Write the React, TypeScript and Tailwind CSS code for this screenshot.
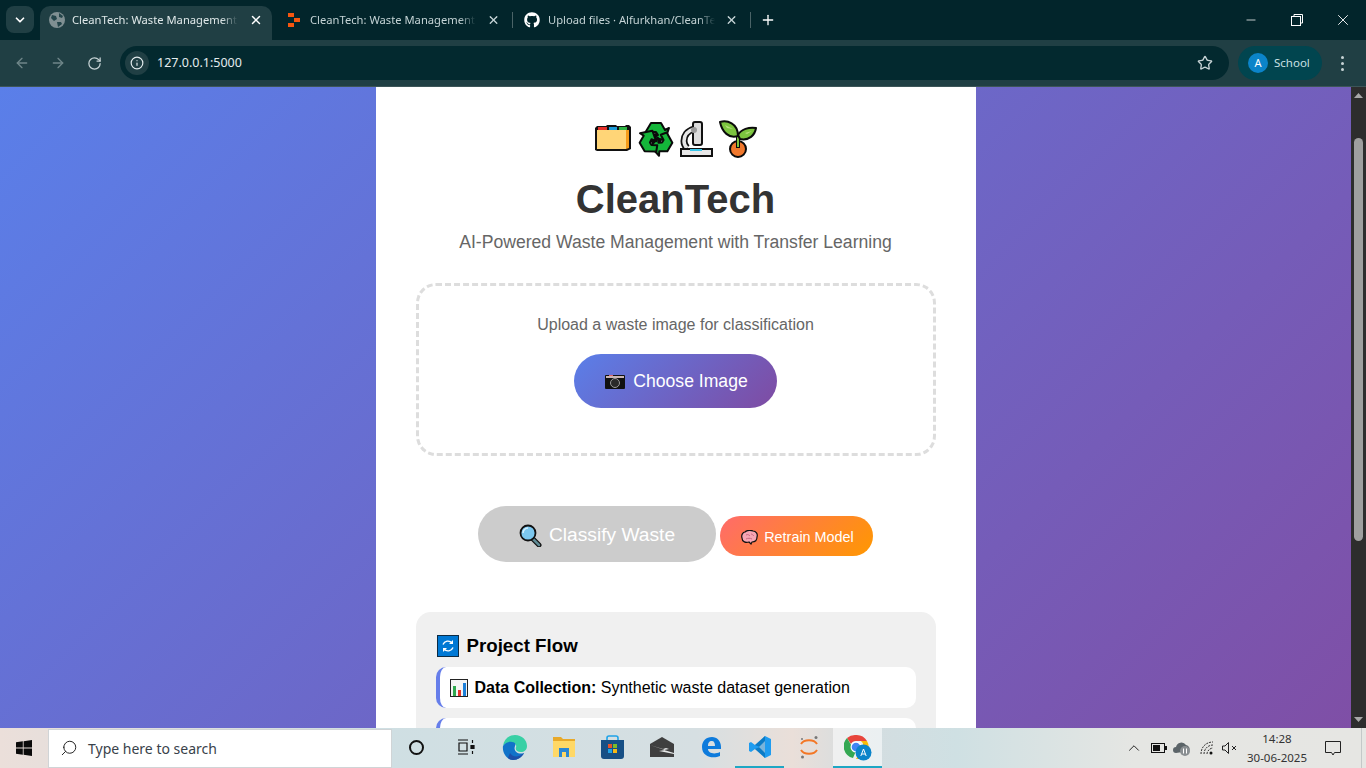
import React from 'react';
import { ArrowLeft, ArrowRight, RotateCw, X, Plus, Star, Info, ChevronDown, ChevronUp, Search, Minus } from 'lucide-react';
import { FaGithub } from 'react-icons/fa';

const FolderEmoji = () => (
  <svg width="38" height="30" viewBox="0 0 38 30" className="block">
    <path d="M3 2h9l1-1h9l1 1h8l1-1h3l2 2v22l-4 2H3l-2-1V4z" fill="#111" />
    <path d="M4 3h9v3H4z" fill="#e5312a" />
    <path d="M15 3h8v3h-8z" fill="#1d9bd8" />
    <path d="M25 3h8v3h-8z" fill="#2fb344" />
    <path d="M32 6h3v18l-3 1z" fill="#f59c1a" />
    <path d="M3 6h29v19H3z" fill="#ffd577" />
  </svg>
);

const RECYCLE_ARROW = 'M7 13 13 3H23L27 10 31 8 27 20 16 18 20 15 18 12H15L12 17Z';

const RecycleEmoji = () => (
  <svg width="36" height="37" viewBox="0 0 36 37" className="block">
    <circle cx="18" cy="19" r="6" fill="#0a0a0a" />
    <g fill="#14b63a" stroke="#0a0a0a" strokeWidth="2" strokeLinejoin="round">
      <path d={RECYCLE_ARROW} />
      <path d={RECYCLE_ARROW} transform="rotate(120 18 19)" />
      <path d={RECYCLE_ARROW} transform="rotate(240 18 19)" />
    </g>
  </svg>
);

const MicroscopeEmoji = () => (
  <svg width="33" height="37" viewBox="0 0 33 37" className="block">
    <path d="M14 9C7 11 4 16 4 21c0 3 1 5 3 7" fill="none" stroke="#111" strokeWidth="7" />
    <path d="M14 9C7 11 4 16 4 21c0 3 1 5 3 7" fill="none" stroke="#e6e6e6" strokeWidth="3.500" />
    <rect x="13" y="2" width="9" height="23" rx="2" fill="#dcdcdc" stroke="#111" strokeWidth="2" />
    <circle cx="14" cy="10" r="3" fill="#9a9a9a" />
    <rect x="1" y="29" width="31" height="7" fill="#e8e8e8" stroke="#111" strokeWidth="2" />
    <path d="M10 29h12v2H10z" fill="#39c6ea" />
  </svg>
);

const SeedlingEmoji = () => (
  <svg width="38" height="38" viewBox="0 0 38 38" className="block">
    <circle cx="19" cy="29" r="8" fill="#f0782d" stroke="#0a0a0a" strokeWidth="2" />
    <path d="M19 16v12" stroke="#0a0a0a" strokeWidth="4" />
    <path d="M19 16v11" stroke="#7cc43f" strokeWidth="2" />
    <path d="M1 2C8 0 19 3 19 16 10 19 3 12 1 2Z" fill="#7cc43f" stroke="#0a0a0a" strokeWidth="2" strokeLinejoin="round" />
    <path d="M19 15c3-6 11-8 18-7-1 7-7 13-16 11z" fill="#7cc43f" stroke="#0a0a0a" strokeWidth="2" strokeLinejoin="round" />
    <path d="M6 5l8 4-6-1zM26 13l7-2-5 3z" fill="#b6e07c" />
  </svg>
);

const CameraEmoji = () => (
  <svg width="20" height="15" viewBox="0 0 20 15" className="inline-block align-[-1px]">
    <rect x="0" y="1" width="20" height="14" rx="1" fill="#111" />
    <path d="M1 2h18v2H1z" fill="#c9b5b5" />
    <path d="M4 1h4v1H4z" fill="#e06666" />
    <circle cx="10" cy="9" r="4.500" fill="#2a2a2a" stroke="#9a9a9a" />
  </svg>
);

const MagnifierEmoji = () => (
  <svg width="23" height="23" viewBox="0 0 23 23" className="inline-block align-[-4px]">
    <path d="M13 14l7 7" stroke="#111" strokeWidth="5" strokeLinecap="round" />
    <path d="M14 15l6 6" stroke="#5f8a94" strokeWidth="2.500" strokeLinecap="round" />
    <circle cx="9" cy="9" r="7.500" fill="#7cc7ee" stroke="#111" strokeWidth="1.800" />
    <path d="M4 9a5 5 0 0 1 5-5" stroke="#d6f1ff" strokeWidth="1.500" fill="none" />
  </svg>
);

const BrainEmoji = () => (
  <svg width="17" height="15" viewBox="0 0 17 15" className="inline-block align-[-2px]">
    <path d="M4 2c2-2 6-2 8-1 3 0 5 3 4 6 0 3-2 5-5 5l-1 2-2-2c-3 1-7 0-7-4-1-3 1-6 3-6z" fill="#f7a6b4" stroke="#111" strokeWidth="1.200" />
    <path d="M5 5c2-1 3 0 4 1M10 4c1 0 2 1 3 2M5 9c2-1 4-1 6 0" stroke="#c96a80" fill="none" />
  </svg>
);

const RefreshEmoji = () => (
  <svg width="22" height="22" viewBox="0 0 22 22" className="inline-block align-[-4px]">
    <rect x="0.500" y="0.500" width="21" height="21" fill="#0078d4" stroke="#0c2b44" />
    <path d="M6 9.500a5.300 5.300 0 0 1 9-1.500M16 12.500a5.300 5.300 0 0 1-9 1.500" stroke="#fff" strokeWidth="1.400" fill="none" />
    <path d="M16 5v4h-4zM6 17v-4h4z" fill="#fff" />
  </svg>
);

const ChartEmoji = () => (
  <svg width="18" height="18" viewBox="0 0 18 18" className="inline-block align-[-3px]">
    <rect x="0.500" y="0.500" width="17" height="17" fill="#f4f4f4" stroke="#222" />
    <path d="M3 7h3v10H3z" fill="#2fa84f" />
    <path d="M8 11h3v6H8z" fill="#e5312a" />
    <path d="M13 4h3v13h-3z" fill="#1d7fd8" />
  </svg>
);

const OrangeFavicon = () => (
  <svg width="12" height="14" viewBox="0 0 12 14" className="shrink-0">
    <path d="M0 0h6v4H0zM6 5h6v4H6zM0 10h6v4H0z" fill="#f4560f" />
  </svg>
);

const GlobeFavicon = () => (
  <svg width="16" height="16" viewBox="0 0 16 16" className="shrink-0">
    <circle cx="8" cy="8" r="8" fill="#7f8f92" />
    <path d="M3 3l4 1 1 3-3 2-3-3zM10 1l4 3-1 2-3-1zM8 10l4 0 1 2-4 3z" fill="#23444a" />
  </svg>
);

const TabTitle = ({ text, w }: { text: string; w: string }) => (
  <span
    className={`${w} overflow-hidden whitespace-nowrap text-[11.2px] [mask-image:linear-gradient(90deg,#000_90%,transparent)]`}
  >
    {text}
  </span>
);

const TabStrip = () => (
  <div className="flex h-10 shrink-0 items-end bg-[#02252b] font-['Noto_Sans',sans-serif] text-[#c4d3d5]">
    <div className="mb-[7px] ml-[6px] flex h-[27px] w-[28px] items-center justify-center rounded-lg bg-[#203f44] text-white">
      <ChevronDown size={14} strokeWidth={3} />
    </div>
    <div className="ml-[6px] flex h-[34px] w-[232px] items-center rounded-t-[10px] bg-[#203f44] pb-[6px] pl-[9px] text-[#dfe8e9]">
      <GlobeFavicon />
      <span className="ml-[7px] flex">
        <TabTitle text="CleanTech: Waste Management" w="w-[166px]" />
      </span>
      <X size={14} strokeWidth={2.5} className="ml-[11px] text-white" />
    </div>
    <div className="flex h-[34px] w-[241px] items-center pb-[6px] pl-[16px]">
      <OrangeFavicon />
      <span className="ml-[10px] flex">
        <TabTitle text="CleanTech: Waste Management" w="w-[166px]" />
      </span>
      <X size={14} strokeWidth={2.5} className="ml-[11px]" />
      <div className="ml-[12px] h-[16px] w-px bg-[#4a6367]" />
    </div>
    <div className="flex h-[34px] w-[238px] items-center pb-[6px] pl-[11px]">
      <FaGithub size={16} className="shrink-0 text-white" />
      <span className="ml-[8px] flex">
        <TabTitle text="Upload files · Alfurkhan/CleanTech" w="w-[167px]" />
      </span>
      <X size={14} strokeWidth={2.5} className="ml-[10px]" />
      <div className="ml-[12px] h-[16px] w-px bg-[#4a6367]" />
    </div>
    <div className="flex h-[34px] items-center pb-[6px] pl-[9px] text-white">
      <Plus size={16} strokeWidth={2} />
    </div>
    <div className="ml-auto flex h-10 items-center text-white">
      <div className="flex w-[46px] justify-center">
        <Minus size={14} strokeWidth={1.3} />
      </div>
      <div className="flex w-[46px] justify-center">
        <svg width="12" height="12" viewBox="0 0 12 12" fill="none" stroke="currentColor">
          <rect x="0.500" y="2.500" width="9" height="9" />
          <path d="M3 2.500V.5h8.500V9H9.500" />
        </svg>
      </div>
      <div className="flex w-[46px] justify-center">
        <X size={18} strokeWidth={1.2} />
      </div>
    </div>
  </div>
);

const Toolbar = () => (
  <div className="flex h-[47px] shrink-0 items-center border-b border-[#3d5558] bg-[#203f44] font-['Noto_Sans',sans-serif]">
    <div className="flex w-[120px] items-center pl-[14px] text-[#6f8689]">
      <ArrowLeft size={16} />
      <ArrowRight size={16} className="ml-[20px]" />
      <RotateCw size={15} className="ml-[21px] text-[#c7d3d5]" />
    </div>
    <div className="flex h-[34px] w-[1109px] items-center rounded-full bg-[#03292f] pl-[5px] pr-[16px] text-[#e3ecee]">
      <div className="flex h-[24px] w-[24px] items-center justify-center rounded-full bg-[#203f44]">
        <Info size={14} />
      </div>
      <span className="ml-[8px] text-[12.5px]">127.0.0.1:5000</span>
      <Star size={16} className="ml-auto text-[#c7d3d5]" />
    </div>
    <div className="ml-[9px] flex h-[34px] w-[84px] items-center rounded-full bg-[#01454f] pl-[10px]">
      <div className="flex h-5 w-5 items-center justify-center rounded-full bg-[#0b84c9] text-[11px] text-white">A</div>
      <span className="ml-[6px] text-[11.5px] text-[#c9e0e3]">School</span>
    </div>
    <div className="ml-[19px] flex flex-col gap-[3px]">
      <span className="h-[3px] w-[3px] rounded-full bg-[#c7d3d5]" />
      <span className="h-[3px] w-[3px] rounded-full bg-[#c7d3d5]" />
      <span className="h-[3px] w-[3px] rounded-full bg-[#c7d3d5]" />
    </div>
  </div>
);

const Scrollbar = () => (
  <div className="flex w-[15px] shrink-0 flex-col items-center bg-[#2d2d2d]">
    <svg width="9" height="5" viewBox="0 0 9 5" className="mt-[6px]">
      <path d="M4.500 0L9 5H0z" fill="#a8a8a8" />
    </svg>
    <div className="mt-[40px] h-[403px] w-[9px] rounded-full bg-[#9f9f9f]" />
    <svg width="9" height="5" viewBox="0 0 9 5" className="mt-auto mb-[6px]">
      <path d="M0 0h9L4.500 5z" fill="#a8a8a8" />
    </svg>
  </div>
);

const Page = () => (
  <div className="flex min-h-0 flex-1">
    <div className="flex min-w-0 flex-1 justify-center overflow-hidden bg-[linear-gradient(135deg,#5a7fe9,#7f4fa6)] font-['Liberation_Sans',sans-serif]">
      <div className="h-fit w-[600px] shrink-0 bg-white px-10 pt-[33px]">
        <div className="flex h-[37px] items-center justify-center gap-[6px]">
          <FolderEmoji />
          <RecycleEmoji />
          <MicroscopeEmoji />
          <SeedlingEmoji />
        </div>
        <h1 className="mt-[19px] text-center text-[40px] leading-[46px] font-bold text-[#333]">CleanTech</h1>
        <p className="mt-[10px] text-center text-[17.6px] leading-[20px] text-[#666]">
          AI-Powered Waste Management with Transfer Learning
        </p>
        <div className="mt-[31px] flex h-[173px] flex-col items-center rounded-[20px] border-[3px] border-dashed border-[#ddd] pt-[30px]">
          <p className="text-[16px] leading-[18px] text-[#666]">Upload a waste image for classification</p>
          <button className="mt-[20px] flex h-[54px] w-[203px] items-center justify-center gap-[8px] rounded-full bg-[linear-gradient(135deg,#5a7fe9,#7f4ba2)] pt-[1px] pl-[2px] text-[17.6px] text-white">
            <CameraEmoji />
            Choose Image
          </button>
        </div>
        <div className="mt-[50px] flex items-center justify-center gap-1">
          <button className="flex h-[56px] w-[238px] items-center justify-center gap-[7px] rounded-full bg-[#ccc] pt-[3px] text-[19.2px] text-white">
            <MagnifierEmoji />
            Classify Waste
          </button>
          <button className="mt-[4px] flex h-[40px] w-[153px] items-center justify-center gap-[6px] rounded-full bg-[linear-gradient(135deg,#ff6b6b,#ff9800)] pt-[3px] pl-[2px] text-[14.4px] text-white">
            <BrainEmoji />
            Retrain Model
          </button>
        </div>
        <div className="mt-[50px] rounded-[15px] bg-[#f0f0f0] p-5">
          <h3 className="flex items-center gap-[8px] pt-px pl-px text-[18.72px] leading-[25px] font-bold text-black">
            <RefreshEmoji />
            Project Flow
          </h3>
          <div className="mt-[9px] flex h-[41px] items-center gap-[7px] rounded-[10px] border-l-4 border-[#667eea] bg-white pt-[1px] pl-[10px] text-[16px] text-black">
            <ChartEmoji />
            <span>
              <strong>Data Collection:</strong> Synthetic waste dataset generation
            </span>
          </div>
          <div className="mt-[10px] h-[41px] rounded-[10px] border-l-4 border-[#667eea] bg-white" />
        </div>
      </div>
    </div>
    <Scrollbar />
  </div>
);

const TaskItem = ({ children, active, open }: { children: React.ReactNode; active?: boolean; open?: boolean }) => (
  <div
    className={`flex h-10 w-[49px] items-center justify-center border-b-[2px] ${active ? 'bg-white/55' : ''} ${
      open ? 'border-[#1ea7c4]' : 'border-transparent'
    }`}
  >
    {children}
  </div>
);

const Taskbar = () => (
  <div className="flex h-10 shrink-0 items-center bg-[linear-gradient(90deg,#ebdfda_0%,#cfdfe3_28%,#d6dfe2_51%,#eadfd9_58%,#d4dde0_63%,#cfe0e3_70%,#e5e6e3_83%,#e6e6e3_100%)] font-['Noto_Sans',sans-serif]">
    <div className="flex w-[48px] justify-center">
      <svg width="16" height="16" viewBox="0 0 16 16">
        <path d="M0 2.300l6.800-1v6.300H0zM7.600 1.200L16 0v7.600H7.600zM0 8.400h6.800v6.300l-6.800-1zM7.600 8.400H16V16l-8.400-1.200z" fill="#0a0a0a" />
      </svg>
    </div>
    <div className="flex h-[39px] w-[344px] items-center border border-[#d0d4d6] bg-white pl-[11px]">
      <Search size={18} strokeWidth={1.3} className="-scale-x-100 text-[#222]" />
      <span className="ml-[10px] text-[14px] text-[#39424a]">Type here to search</span>
    </div>
    <TaskItem>
      <div className="h-[15px] w-[15px] rounded-full border-[2.5px] border-[#111]" />
    </TaskItem>
    <TaskItem>
      <svg width="18" height="16" viewBox="0 0 18 16" fill="none" stroke="#111" strokeWidth="1.200">
        <path d="M1 1h10M1 15h10M2 4h8v8H2zM15.500 1v3M15.500 12v3" />
        <path d="M14 6.500h3v3h-3z" fill="#111" />
      </svg>
    </TaskItem>
    <TaskItem>
      <svg width="25" height="25" viewBox="0 0 25 25">
        <path d="M1 11C2 4 7 0 13 0c7 0 12 5 12 11 0 4-3 6-6 6-4 0-6-2-5-5 1-2-1-4-5-4-4 0-7 1-8 3z" fill="#38d0a5" />
        <path d="M1 11c2-3 6-5 9-4 3 0 4 2 3 4-2 5 3 9 9 7-2 4-6 7-11 7C5 25 0 18 1 11z" fill="#1173c9" />
        <path d="M8 18c2 3 7 6 14 0-2 4-6 7-11 7-2 0-4-1-5-2z" fill="#1d4fa8" />
      </svg>
    </TaskItem>
    <TaskItem>
      <svg width="22" height="20" viewBox="0 0 22 20">
        <path d="M0 0h8l2 2h12v4H0z" fill="#e8a92a" />
        <path d="M0 4h22v16H0z" fill="#ffd866" />
        <path d="M6 11h10v9h-3v-5H9v5H6z" fill="#2b87d3" />
      </svg>
    </TaskItem>
    <TaskItem>
      <svg width="23" height="24" viewBox="0 0 23 24">
        <path d="M6 5V3a2 2 0 0 1 2-2h7a2 2 0 0 1 2 2v2" fill="none" stroke="#1fa3e8" strokeWidth="1.600" />
        <path d="M0 5h23v16a3 3 0 0 1-3 3H3a3 3 0 0 1-3-3z" fill="#174f85" />
        <path d="M7 9h4v4H7z" fill="#e8532a" />
        <path d="M12 9h4v4h-4z" fill="#7cbb2a" />
        <path d="M7 14h4v4H7z" fill="#1fa3e8" />
        <path d="M12 14h4v4h-4z" fill="#f7b916" />
      </svg>
    </TaskItem>
    <TaskItem>
      <svg width="24" height="20" viewBox="0 0 24 20">
        <path d="M0 7L12 0l12 7v13H0z" fill="#3f3f3f" />
        <path d="M0 8l15 5-6 1 15 3v-1l-10-3 5-1-3-1-3 1z" fill="#e6e8e8" />
      </svg>
    </TaskItem>
    <TaskItem>
      <svg width="20" height="22" viewBox="0 0 20 22">
        <path d="M1 11C1 5 5 1 11 1c5 0 9 4 9 10v2H7c0 4 6 6 12 3v4c-7 3-18 1-18-9zm6-1h7c0-3-1-5-3-5-3 0-4 2-4 5z" fill="#0d7bdc" />
      </svg>
    </TaskItem>
    <TaskItem open>
      <svg width="24" height="24" viewBox="0 0 24 24">
        <path d="M17 1l6 3v16l-6 3L7 14l-4 3-2-1v-8l2-1 4 3z" fill="#1f9cf0" />
        <path d="M17 1v22l-10-9 5-2-5-2z" fill="#0065a9" opacity="0.600" />
        <path d="M17 6l-6 6 6 6z" fill="#e6eef2" opacity="0.500" />
      </svg>
    </TaskItem>
    <TaskItem>
      <svg width="20" height="24" viewBox="0 0 20 24" fill="none">
        <path d="M2 9c3-5 13-5 16 0M2 15c3 5 13 5 16 0" stroke="#f37726" strokeWidth="2" />
        <circle cx="17" cy="2.500" r="1.500" fill="#777" />
        <circle cx="3" cy="4" r="1" fill="#777" />
        <circle cx="3.500" cy="22" r="1.500" fill="#777" />
      </svg>
    </TaskItem>
    <TaskItem active open>
      <svg width="28" height="27" viewBox="0 0 28 27">
        <path d="M12 1a12 12 0 0 1 11 6H12a5.500 5.500 0 0 0-5 3L3 4a12 12 0 0 1 9-3z" fill="#e8453c" />
        <path d="M3 4l6 10a5.500 5.500 0 0 0 3 3l-3 7A12 12 0 0 1 3 4z" fill="#34a853" />
        <path d="M23 7a12 12 0 0 1-11 18l5-9a5.500 5.500 0 0 0 0-9z" fill="#fbbc05" />
        <circle cx="12" cy="13" r="5.500" fill="#fff" />
        <circle cx="12" cy="13" r="4.300" fill="#4285f4" />
        <circle cx="19.500" cy="18.500" r="8" fill="#0b84c9" />
        <path d="M16.800 22l2.700-7 2.700 7M17.800 20h3.400" stroke="#fff" strokeWidth="1" fill="none" />
      </svg>
    </TaskItem>
    <div className="ml-auto flex h-10 items-center text-[#222]">
      <ChevronUp size={18} strokeWidth={1.3} />
      <svg width="16" height="10" viewBox="0 0 16 10" className="ml-[8px]">
        <rect x="0.500" y="0.500" width="13" height="9" fill="none" stroke="#111" />
        <rect x="2" y="2" width="7" height="6" fill="#111" />
        <rect x="14" y="3" width="2" height="4" fill="#111" />
      </svg>
      <svg width="18" height="16" viewBox="0 0 18 16" className="ml-[6px]">
        <path d="M3 13a3 3 0 0 1 0-6 5.500 5.500 0 0 1 10-2 4 4 0 0 1 3 6z" fill="#5b6468" />
        <circle cx="12" cy="11" r="5" fill="#8a8f92" />
        <path d="M10.500 8.500v5M13.500 8.500v5" stroke="#fff" />
      </svg>
      <svg width="14" height="14" viewBox="0 0 14 14" fill="none" stroke="#333" className="ml-[9px]">
        <path d="M1 13C1 6 6 1 13 1M4 13c0-5 4-9 9-9M7 13c0-3 3-6 6-6" strokeDasharray="2 1" />
        <circle cx="11" cy="12" r="1.500" fill="#111" stroke="none" />
      </svg>
      <svg width="15" height="14" viewBox="0 0 15 14" fill="none" stroke="#222" className="ml-[8px]">
        <path d="M.5 5h2.500L6.500 1.500v11L3 9H.5z" />
        <path d="M10 5l4 4M14 5l-4 4" />
      </svg>
      <div className="flex w-[80px] flex-col items-center text-[11.5px] leading-[19px] text-[#333]">
        <span>14:28</span>
        <span>30-06-2025</span>
      </div>
      <svg width="16" height="15" viewBox="0 0 16 15" fill="none" stroke="#222" className="ml-[8px]">
        <path d="M.5.500h15v11H9.500L8 14l-1.500-2.500H.5z" />
      </svg>
      <div className="ml-[20px] h-10 w-[5px] border-l border-[#c4c8c8]" />
    </div>
  </div>
);

export default function App() {
  return (
    <div className="flex h-[768px] w-[1366px] flex-col overflow-hidden">
      <TabStrip />
      <Toolbar />
      <Page />
      <Taskbar />
    </div>
  );
}
